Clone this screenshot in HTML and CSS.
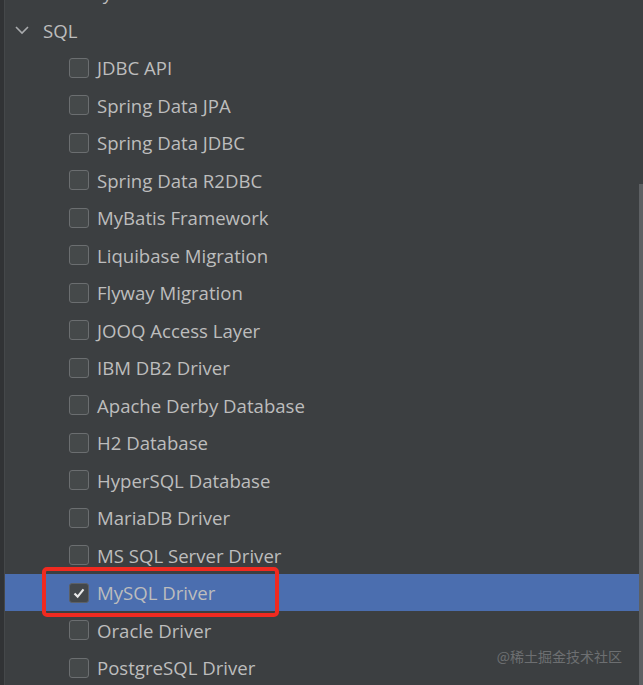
FILE: index.html
```html
<!DOCTYPE html>
<html lang="zh-CN">
<head>
    <meta charset="UTF-8">
    <title>Dependencies - SQL</title>
    <link rel="stylesheet" href="styles.css">
</head>
<body>
    <div class="panel">
        <div class="gutter"></div>
        <div class="tree-view">
            <ul class="tree">
                <li class="group">
                    <svg class="chevron" viewBox="0 0 14 14"><path d="M4 2l5 5-5 5"/></svg>
                    <span>Security</span>
                </li>
                <li class="group">
                    <svg class="chevron" viewBox="0 0 14 14"><path d="M1 4l6 6 6-6"/></svg>
                    <span>SQL</span>
                </li>
                <li class="item"><span class="box"></span>JDBC API</li>
                <li class="item"><span class="box"></span>Spring Data JPA</li>
                <li class="item"><span class="box"></span>Spring Data JDBC</li>
                <li class="item"><span class="box"></span>Spring Data R2DBC</li>
                <li class="item"><span class="box"></span>MyBatis Framework</li>
                <li class="item"><span class="box"></span>Liquibase Migration</li>
                <li class="item"><span class="box"></span>Flyway Migration</li>
                <li class="item"><span class="box"></span>JOOQ Access Layer</li>
                <li class="item"><span class="box"></span>IBM DB2 Driver</li>
                <li class="item"><span class="box"></span>Apache Derby Database</li>
                <li class="item"><span class="box"></span>H2 Database</li>
                <li class="item"><span class="box"></span>HyperSQL Database</li>
                <li class="item"><span class="box"></span>MariaDB Driver</li>
                <li class="item"><span class="box"></span>MS SQL Server Driver</li>
                <li class="item selected">
                    <span class="box checked">
                        <svg viewBox="0 0 20 20"><path d="M5 10.5l3.5 3.5 6.5-8"/></svg>
                    </span>MySQL Driver
                    <span class="highlight"></span>
                </li>
                <li class="item"><span class="box"></span>Oracle Driver</li>
                <li class="item"><span class="box"></span>PostgreSQL Driver</li>
            </ul>
            <div class="scrollbar"></div>
            <div class="watermark">@稀土掘金技术社区</div>
        </div>
    </div>
</body>
</html>
```

FILE: styles.css
```css
:root {
    --bg: #3c3f41;
    --text: #bdbdbd;
    --select: #4b6eaf;
}

html, body {
    margin: 0;
    padding: 0;
    height: 100%;
    overflow: hidden;
}

body {
    background: var(--bg);
    font-family: "Open Sans", "Noto Sans", "Noto Sans CJK SC", sans-serif;
    color: var(--text);
}

.panel {
    display: flex;
    height: 685px;
}

.gutter {
    width: 4px;
    background: #313335;
    border-right: 1px solid #45484a;
}

.tree-view {
    position: relative;
    flex: 1;
    overflow: hidden;
}

/* list is scrolled a little: the row above SQL is cut at the top */
.tree {
    list-style: none;
    margin: -26.25px 0 0;
    padding: 0;
}

.tree li {
    position: relative;
    display: flex;
    align-items: center;
    height: 37.5px;
    font-size: 18.6px;
    white-space: nowrap;
}

.group {
    padding-left: 10px;
}

.chevron {
    width: 14px;
    height: 14px;
    margin-right: 14px;
    fill: none;
    stroke: #a9abad;
    stroke-width: 1.6;
}

.item {
    padding-left: 64px;
}

.box {
    box-sizing: border-box;
    width: 20px;
    height: 20px;
    margin-right: 8px;
    border: 1px solid #6b6e70;
    border-radius: 3px;
    background: #45494a;
    display: flex;
    align-items: center;
    justify-content: center;
}

.box svg {
    width: 18px;
    height: 18px;
    fill: none;
    stroke: #e8e8e8;
    stroke-width: 2.4;
}

.box.checked {
    background: #43474a;
    border-color: #5c6066;
}

.item.selected {
    background: var(--select);
}

/* red annotation frame round the selected row */
.highlight {
    position: absolute;
    left: 37px;
    top: -6.5px;
    width: 237px;
    height: 50px;
    box-sizing: border-box;
    border: 4px solid #f02a20;
    border-radius: 5px;
}

.scrollbar {
    position: absolute;
    right: 0;
    top: 184px;
    bottom: 0;
    width: 4px;
    background: #5d6063;
}

.watermark {
    position: absolute;
    right: 21px;
    bottom: 19px;
    font-size: 14px;
    color: #6d6f71;
    font-family: "Noto Sans CJK SC", sans-serif;
}
```
